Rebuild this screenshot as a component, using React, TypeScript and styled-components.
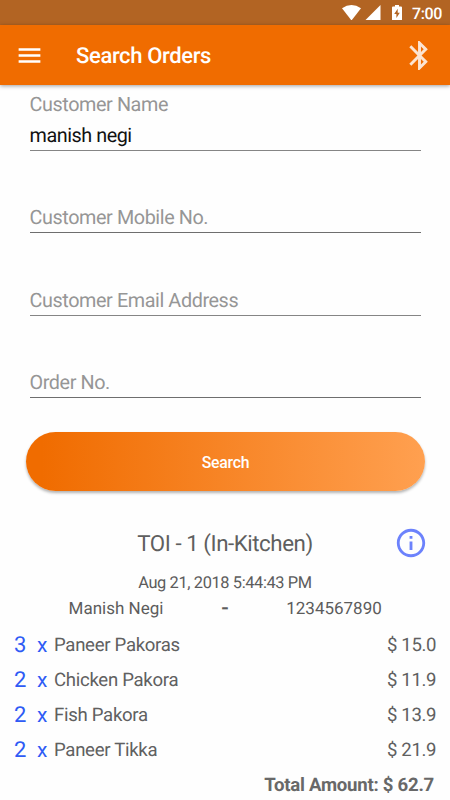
import React from "react";
import styled, { createGlobalStyle } from "styled-components";
import { MdBluetooth, MdInfoOutline, MdMenu } from "react-icons/md";

const GlobalStyle = createGlobalStyle`
  * { box-sizing: border-box; }
  body {
    margin: 0;
    background: #fefefe;
    font-family: Roboto, sans-serif;
    text-rendering: geometricPrecision;
    overflow: hidden;
  }
  svg { display: block; flex: none; }
`;

const Screen = styled.div`
  width: 450px;
  height: 800px;
  overflow: hidden;
  display: flex;
  flex-direction: column;
  background: #fefefe;
`;

const StatusBar = styled.div`
  height: 25px;
  flex: none;
  display: flex;
  align-items: center;
  justify-content: flex-end;
  padding: 0 8px 0 0;
  background: #b26423;
  color: #fff;
`;

const StatusIcon = styled.svg<{ $gap: number }>`
  margin-right: ${(p) => p.$gap}px;
  fill: currentColor;
`;

const Clock = styled.span`
  width: 30px;
  margin-top: 3px;
  font-size: 16px;
  letter-spacing: -0.4px;
  line-height: 24px;
  font-weight: 500;
  display: flex;
  justify-content: flex-end;
  white-space: nowrap;
`;

const AppBar = styled.header`
  height: 60px;
  flex: none;
  display: flex;
  align-items: center;
  padding: 0 13px 0 15px;
  background: #f06c00;
  color: #fff;
  box-shadow: 0 1px 4px rgba(0, 0, 0, 0.38);
`;

const Title = styled.h1`
  flex: 1;
  margin: 3px 0 0 32px;
  font-size: 22px;
  letter-spacing: -0.36px;
  font-weight: 500;
  line-height: 28px;
`;

const Form = styled.form`
  flex: none;
  height: 347px;
  padding: 0 29.5px;
`;

const Field = styled.label<{ $first?: boolean }>`
  display: flex;
  flex-direction: column;
  justify-content: flex-end;
  height: ${(p) => (p.$first ? "66px" : "82.4px")};
  border-bottom: 1px solid #6e6e6e;

  &:nth-child(odd) {
    border-bottom-color: #858585;
  }
`;

const Hint = styled.span<{ $floating?: boolean }>`
  font-size: 19.8px;
  letter-spacing: -0.4px;
  line-height: 24px;
  color: #969696;
  margin-bottom: ${(p) => (p.$floating ? "7px" : "2px")};
`;

const Value = styled.span`
  font-size: 19.8px;
  letter-spacing: -0.45px;
  line-height: 24px;
  color: #111;
  margin-bottom: 2px;
`;

const SearchButton = styled.button`
  flex: none;
  height: 59px;
  margin: 0 25.5px;
  border: 0;
  border-radius: 30px;
  background: linear-gradient(90deg, #f06c00 4%, #ffa050);
  box-shadow: 0 2px 3px rgba(0, 0, 0, 0.3);
  color: #fff;
  font: 500 15.8px/20px Roboto, sans-serif;
  letter-spacing: -0.25px;
  padding: 2px 0 0 1px;
`;

const OrderHeader = styled.div`
  flex: none;
  height: 78px;
  padding: 26px 22px 0 54px;
  display: grid;
  grid-template-columns: 1fr 34px;
  align-items: center;
  justify-items: center;
  color: #6c82fc;
`;

const OrderTitle = styled.h2`
  margin: 2px 0 0;
  font-size: 22.3px;
  letter-spacing: -0.45px;
  line-height: 28px;
  font-weight: 400;
  color: #5f5f5f;
  padding-left: 2px;
`;

const OrderDate = styled.div`
  flex: none;
  height: 27px;
  text-align: center;
  font-size: 16.4px;
  letter-spacing: -0.38px;
  line-height: 29px;
  color: #5c5c5c;
`;

const Customer = styled.div`
  flex: none;
  height: 31px;
  display: grid;
  grid-template-columns: 188px 1fr 188px;
  padding: 0 22px 4px;
  text-align: center;
  font-size: 17px;
  line-height: 27px;
  color: #5c5c5c;
`;

const Dash = styled.span`
  font-size: 22px;
  line-height: 26px;
  font-weight: 500;
`;

const Items = styled.ul`
  flex: none;
  margin: 0;
  padding: 0;
  list-style: none;
`;

const Item = styled.li`
  height: 35px;
  padding: 0 14px;
  display: flex;
  align-items: center;
  color: #606060;
  font-size: 18.6px;
  letter-spacing: -0.3px;
`;

const Quantity = styled.span`
  width: 23px;
  padding-top: 1px;
  font-size: 22px;
  color: #2f5bf5;
`;

const Times = styled.span`
  width: 17px;
  padding-top: 2px;
  font-size: 21px;
  color: #2f5bf5;
`;

const ItemName = styled.span`
  flex: 1;
`;

const Price = styled.span`
  letter-spacing: -0.4px;
`;

const Total = styled.div`
  flex: none;
  height: 36px;
  padding-right: 16px;
  text-align: right;
  font-size: 18.6px;
  letter-spacing: -0.25px;
  line-height: 36px;
  font-weight: 700;
  color: #686868;
`;

const items = [
  { quantity: 3, name: "Paneer Pakoras", price: "$ 15.0" },
  { quantity: 2, name: "Chicken Pakora", price: "$ 11.9" },
  { quantity: 2, name: "Fish Pakora", price: "$ 13.9" },
  { quantity: 2, name: "Paneer Tikka", price: "$ 21.9" },
];

const emptyFields = ["Customer Mobile No.", "Customer Email Address", "Order No."];

export default function App() {
  return (
    <>
      <GlobalStyle />
      <Screen>
        <StatusBar>
          <StatusIcon $gap={4} width="19" height="15.5" viewBox="0 0 19 15.5">
            <path d="M0 3.3 Q9.5 -3.3 19 3.3 L9.5 15.5 Z" />
          </StatusIcon>
          <StatusIcon $gap={11.5} width="15.5" height="15.5" viewBox="0 0 15.5 15.5">
            <path d="M15.5 0 V15.5 H0 Z" />
          </StatusIcon>
          <StatusIcon $gap={10} width="10" height="15.5" viewBox="0 0 10 15.5">
            <path
              fillRule="evenodd"
              d="M3 0 H7 V1.5 H9 Q10 1.5 10 2.5 V14.5 Q10 15.5 9 15.5 H1 Q0 15.5 0 14.5 V2.5 Q0 1.5 1 1.5 H3 Z M5.7 3.8 L2.2 9 H4.4 V13 L7.8 7.7 H5.7 Z"
            />
          </StatusIcon>
          <Clock>7:00</Clock>
        </StatusBar>
        <AppBar>
          <MdMenu size={29} />
          <Title>Search Orders</Title>
          <MdBluetooth size={35} opacity={0.82} />
        </AppBar>
        <Form>
          <Field $first>
            <Hint $floating>Customer Name</Hint>
            <Value>manish negi</Value>
          </Field>
          {emptyFields.map((name) => (
            <Field key={name}>
              <Hint>{name}</Hint>
            </Field>
          ))}
        </Form>
        <SearchButton type="button">Search</SearchButton>
        <OrderHeader>
          <OrderTitle>TOI - 1 (In-Kitchen)</OrderTitle>
          <MdInfoOutline size={34} />
        </OrderHeader>
        <OrderDate>Aug 21, 2018 5:44:43 PM</OrderDate>
        <Customer>
          <span>Manish Negi</span>
          <Dash>-</Dash>
          <span>1234567890</span>
        </Customer>
        <Items>
          {items.map((item) => (
            <Item key={item.name}>
              <Quantity>{item.quantity}</Quantity>
              <Times>x</Times>
              <ItemName>{item.name}</ItemName>
              <Price>{item.price}</Price>
            </Item>
          ))}
        </Items>
        <Total>Total Amount: $ 62.7</Total>
      </Screen>
    </>
  );
}
